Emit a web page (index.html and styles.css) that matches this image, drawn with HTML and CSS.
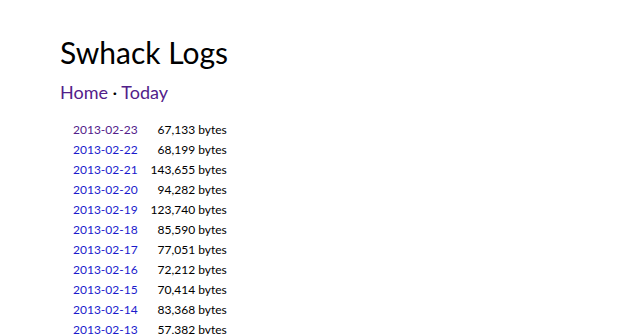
FILE: index.html
```html
<!DOCTYPE html>
<html lang="en">
<head>
    <meta charset="UTF-8"/>
    <title>Swhack Logs</title>
    <link rel="stylesheet" href="styles.css">
</head>
<body>
<h1>Swhack Logs</h1>
<p class="nav"><a class="visited" href="#">Home</a> · <a class="visited" href="#">Today</a></p>
<table class="logs">
    <tr><td><a class="visited" href="#">2013-02-23</a></td><td class="size">67,133 bytes</td></tr>
    <tr><td><a href="#">2013-02-22</a></td><td class="size">68,199 bytes</td></tr>
    <tr><td><a href="#">2013-02-21</a></td><td class="size">143,655 bytes</td></tr>
    <tr><td><a href="#">2013-02-20</a></td><td class="size">94,282 bytes</td></tr>
    <tr><td><a href="#">2013-02-19</a></td><td class="size">123,740 bytes</td></tr>
    <tr><td><a href="#">2013-02-18</a></td><td class="size">85,590 bytes</td></tr>
    <tr><td><a href="#">2013-02-17</a></td><td class="size">77,051 bytes</td></tr>
    <tr><td><a href="#">2013-02-16</a></td><td class="size">72,212 bytes</td></tr>
    <tr><td><a href="#">2013-02-15</a></td><td class="size">70,414 bytes</td></tr>
    <tr><td><a href="#">2013-02-14</a></td><td class="size">83,368 bytes</td></tr>
    <tr><td><a href="#">2013-02-13</a></td><td class="size">57,382 bytes</td></tr>
    <tr><td><a href="#">2013-02-12</a></td><td class="size">61,904 bytes</td></tr>
</table>
</body>
</html>
```
FILE: styles.css
```css
body {
    margin: 0;
    padding: 0 60px;
    font-family: Lato, sans-serif;
    color: #000;
}

h1 {
    margin: 34px 0 0;
    font-size: 30px;
    font-weight: normal;
    line-height: 36px;
}

.nav {
    margin: 10px 0 0;
    font-size: 18px;
    line-height: 24px;
}

a {
    color: #1a1acc;
    text-decoration: none;
}

a.visited {
    color: #52208a;
}

.logs {
    margin: 15px 0 0 10px;
    border-collapse: collapse;
    font-size: 12px;
}

.logs td {
    padding: 0 3px;
    height: 20px;
}

.logs .size {
    text-align: right;
    padding-left: 10px;
}
```
